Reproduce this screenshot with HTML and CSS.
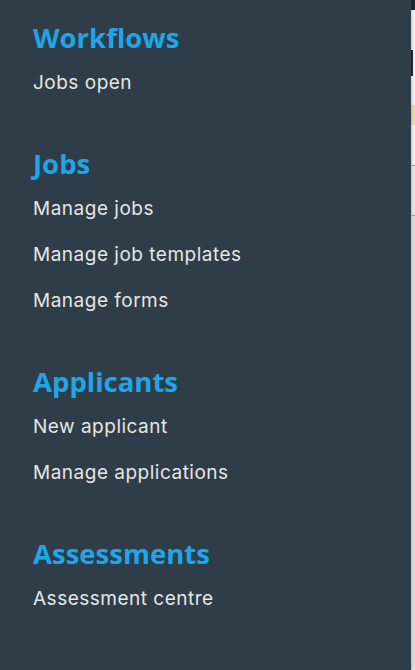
FILE: index.html
```html
<!DOCTYPE html>
<html lang="en">
<head>
  <meta charset="UTF-8">
  <title>Menu</title>
  <link rel="stylesheet" href="styles.css">
</head>
<body>

  <nav class="sidebar">
    <div class="group">
      <h3>Workflows</h3>
      <a href="#">Jobs open</a>
    </div>
    <div class="group">
      <h3>Jobs</h3>
      <a href="#">Manage jobs</a>
      <a href="#">Manage job templates</a>
      <a href="#">Manage forms</a>
    </div>
    <div class="group">
      <h3>Applicants</h3>
      <a href="#">New applicant</a>
      <a href="#">Manage applications</a>
    </div>
    <div class="group">
      <h3>Assessments</h3>
      <a href="#">Assessment centre</a>
    </div>
  </nav>

  <div class="page">
    <div class="topbar"></div>
    <div class="title"><span class="glyph"></span></div>
    <div class="notice"></div>
    <div class="tabs"></div>
    <div class="content"></div>
  </div>

</body>
</html>
```

FILE: styles.css
```css
body {
  margin: 0;
  height: 100vh;
  display: flex;
  overflow: hidden;
  background: #ececec;
}
.sidebar {
  width: 411px;
  flex-shrink: 0;
  background: #2f3d48;
  padding: 22px 0 0 33px;
  box-sizing: border-box;
  box-shadow: 2px 0 4px #00000033;
  position: relative;
  z-index: 1;
}
.group {
  margin-bottom: 42px;
}
.group h3 {
  margin: 0 0 6px;
  font-family: "Open Sans", sans-serif;
  font-weight: 700;
  font-size: 27.5px;
  line-height: 32px;
  color: #1ea6e8;
}
.group a {
  display: block;
  font-family: Inter, sans-serif;
  font-size: 19px;
  letter-spacing: 0.5px;
  line-height: 46px;
  color: #e6e6e6;
  text-decoration: none;
}
.page {
  flex: 1;
  display: flex;
  flex-direction: column;
  background: white;
}
.topbar {
  height: 10px;
  background: #1d2a3a;
}
.title {
  height: 95px;
  padding-top: 40px;
  box-sizing: border-box;
}
.glyph {
  display: block;
  width: 2px;
  height: 26px;
  background: #1e2f55;
}
.notice {
  height: 20px;
  background: #f7e9b8;
}
.tabs {
  height: 49px;
  margin-top: 40px;
  border-top: 1px solid #a9b2ba;
  border-bottom: 1px solid #a9b2ba;
  background: #f4f4f4;
}
.content {
  flex: 1;
  background: #ebebeb;
}
```
